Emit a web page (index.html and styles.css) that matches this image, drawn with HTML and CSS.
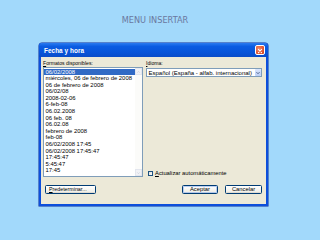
FILE: index.html
```html
<!DOCTYPE html>
<html>
<head>
<meta charset="utf-8">
<link rel="stylesheet" href="styles.css">
</head>
<body>
<div class="page">
  <div class="heading">MENU INSERTAR</div>
  <div class="dialog">
    <div class="titlebar">
      <span class="title">Fecha y hora</span>
      <span class="close"><svg viewBox="0 0 10 10" width="10" height="10"><path d="M3 3 L7 7 M7 3 L3 7" stroke="#fff" stroke-width="1.3" stroke-linecap="round"/></svg></span>
    </div>
    <div class="body">
      <div class="cols">
        <div class="col-left">
          <div class="label"><u>F</u>ormatos disponibles:</div>
          <div class="listbox">
            <div class="items">
              <div class="item sel">06/02/2008</div>
              <div class="item">miércoles, 06 de febrero de 2008</div>
              <div class="item">06 de febrero de 2008</div>
              <div class="item">06/02/08</div>
              <div class="item">2008-02-06</div>
              <div class="item">6-feb-08</div>
              <div class="item">06.02.2008</div>
              <div class="item">06 feb. 08</div>
              <div class="item">06.02.08</div>
              <div class="item">febrero de 2008</div>
              <div class="item">feb-08</div>
              <div class="item">06/02/2008 17:45</div>
              <div class="item">06/02/2008 17:45:47</div>
              <div class="item">17:45:47</div>
              <div class="item">5:45:47</div>
              <div class="item">17:45</div>
            </div>
            <div class="scroll">
              <div class="sbtn"><svg viewBox="0 0 6 6" width="6" height="6"><path d="M1.5 3.8 L3 2.3 L4.5 3.8" stroke="#c9cdd8" fill="none" stroke-width="0.9"/></svg></div>
              <div class="strack"></div>
              <div class="sbtn"><svg viewBox="0 0 6 6" width="6" height="6"><path d="M1.5 2.3 L3 3.8 L4.5 2.3" stroke="#c9cdd8" fill="none" stroke-width="0.9"/></svg></div>
            </div>
          </div>
        </div>
        <div class="col-right">
          <div class="label"><u>I</u>dioma:</div>
          <div class="select">
            <span class="seltext">Español (España - alfab. internacional)</span>
            <span class="dd"><svg viewBox="0 0 6 6" width="6" height="6"><path d="M1.5 2.2 L3 3.7 L4.5 2.2" stroke="#4d6185" fill="none" stroke-width="1"/></svg></span>
          </div>
          <div class="spacer"></div>
          <div class="check"><span class="box"></span><span><u>A</u>ctualizar automáticamente</span></div>
        </div>
      </div>
      <div class="buttons">
        <div class="btn btn-wide"><u>P</u>redeterminar...</div>
        <div class="right-btns">
          <div class="btn btn-default">Aceptar</div>
          <div class="btn">Cancelar</div>
        </div>
      </div>
    </div>
  </div>
</div>
</body>
</html>
```
FILE: styles.css
```css
html, body {
  margin: 0;
  padding: 0;
  background: #a2d9fb;
}
.page {
  width: 320px;
  height: 240px;
  display: flex;
  flex-direction: column;
  font-family: "Liberation Sans", Arial, sans-serif;
}
.heading {
  height: 43px;
  line-height: 40px;
  text-align: center;
  padding-right: 10px;
  font-family: "DejaVu Sans", sans-serif;
  font-size: 8.2px;
  color: #6a78a0;
}
.dialog {
  margin-left: 39px;
  width: 229px;
  height: 163px;
  box-sizing: border-box;
  background: #ece9d8;
  border: 2px solid #0d4fdb;
  border-top: 0;
  box-shadow: 0 0 0 0.5px #082a9c;
  border-radius: 3px 3px 0 0;
  display: flex;
  flex-direction: column;
}
.titlebar {
  height: 14px;
  margin: 0 -2px;
  background: linear-gradient(to bottom, #2a7af0 0%, #0a5ce2 25%, #0853d8 70%, #0a4cc8 100%);
  border-radius: 3px 3px 0 0;
  display: flex;
  align-items: center;
  justify-content: space-between;
  padding: 0 3px 0 5px;
}
.title {
  color: #fff;
  font-weight: bold;
  font-size: 6.4px;
  letter-spacing: 0.05px;
}
.close {
  width: 10px;
  height: 10px;
  box-sizing: border-box;
  border: 0.6px solid #fff;
  border-radius: 2px;
  background: radial-gradient(circle at 35% 35%, #f08a6a, #e0502a 70%, #c83a18);
  display: flex;
}
.body {
  flex: 1;
  display: flex;
  flex-direction: column;
  padding: 3px 4px 0 2px;
  font-size: 6px;
  color: #000;
}
.cols {
  display: flex;
  gap: 3px;
}
.col-left {
  width: 100px;
  display: flex;
  flex-direction: column;
}
.col-right {
  flex: 1;
  display: flex;
  flex-direction: column;
}
.label {
  height: 7px;
  line-height: 6px;
  font-size: 5.1px;
  white-space: nowrap;
}
.listbox {
  height: 110px;
  box-sizing: border-box;
  background: #fff;
  border: 1px solid #7f9db9;
  display: flex;
}
.items {
  flex: 1;
  padding-top: 0.5px;
  font-size: 5.9px;
}
.item {
  height: 6.6px;
  line-height: 6.6px;
  padding-left: 1.5px;
  white-space: nowrap;
}
.item.sel {
  background: #316ac5;
  color: #fff;
}
.scroll {
  width: 7px;
  display: flex;
  flex-direction: column;
  background: #fbfbf9;
}
.sbtn {
  height: 7px;
  background: #f1f2f6;
  border: 0.5px solid #e3e6ee;
  box-sizing: border-box;
  display: flex;
  align-items: center;
  justify-content: center;
}
.strack {
  flex: 1;
}
.select {
  margin-top: 1px;
  height: 9px;
  box-sizing: border-box;
  background: #fff;
  border: 1px solid #7f9db9;
  display: flex;
  align-items: center;
  justify-content: space-between;
  padding-left: 1.5px;
}
.seltext {
  white-space: nowrap;
}
.dd {
  width: 6px;
  height: 7px;
  background: linear-gradient(#dbe6fd, #b9cdf8);
  border-radius: 1px;
  display: flex;
  align-items: center;
  justify-content: center;
}
.spacer {
  flex: 1;
}
.check {
  display: flex;
  align-items: center;
  gap: 2px;
  height: 6px;
  margin-bottom: 1px;
  margin-left: 2px;
  font-size: 5.8px;
  white-space: nowrap;
}
.box {
  width: 5px;
  height: 5px;
  box-sizing: border-box;
  border: 0.8px solid #1c5180;
  background: linear-gradient(135deg, #dcdcd7, #fff);
}
.buttons {
  margin-top: 8px;
  display: flex;
  justify-content: space-between;
  padding-left: 2px;
}
.right-btns {
  display: flex;
  gap: 7px;
}
.btn {
  width: 37px;
  height: 9px;
  box-sizing: border-box;
  border: 0.8px solid #003c74;
  border-radius: 1.5px;
  background: linear-gradient(#ffffff, #f1f0ea 80%, #d6d0c5);
  text-align: center;
  line-height: 7.5px;
  font-size: 5.8px;
  white-space: nowrap;
}
.btn-wide {
  width: 51px;
  text-align: left;
  padding-left: 3px;
  font-size: 5.3px;
}
.btn-default {
  width: 36px;
  box-shadow: inset 0 0 0 0.8px #a6c1f0;
}
```
